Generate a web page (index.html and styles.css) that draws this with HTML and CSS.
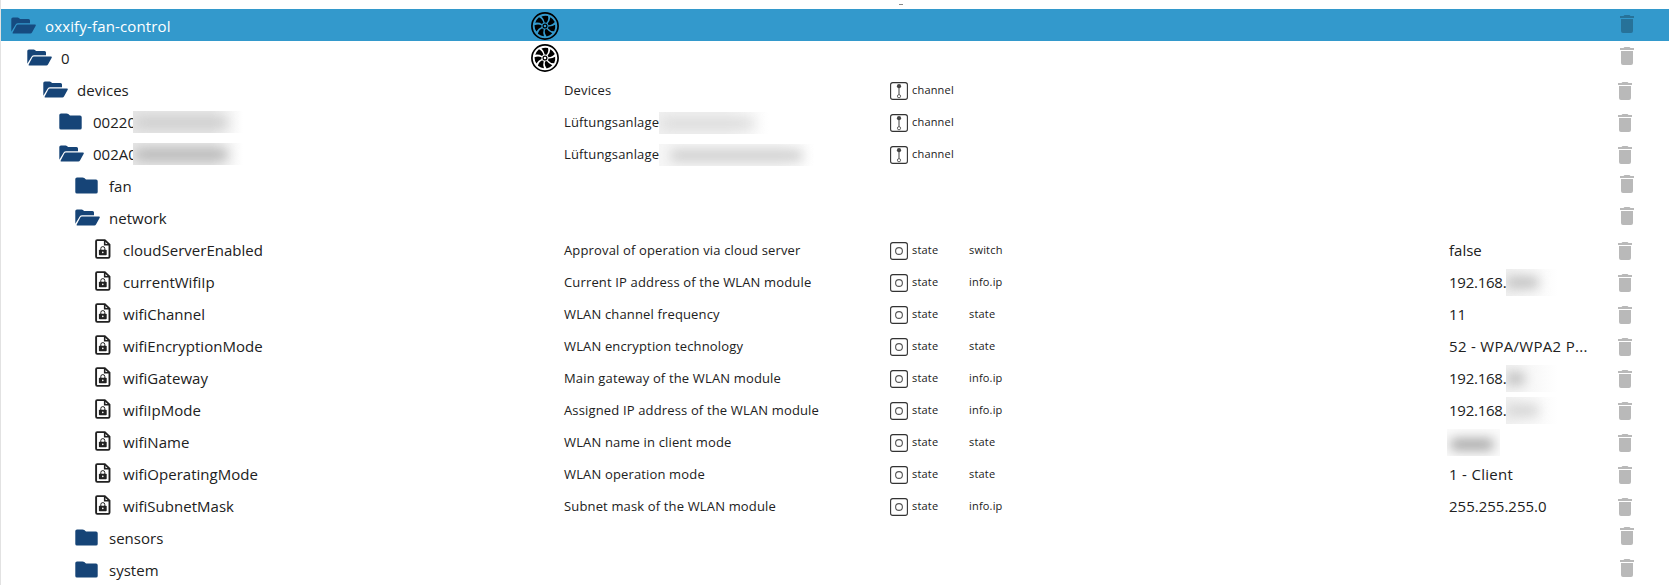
FILE: index.html
```
<!DOCTYPE html>
<html lang="en">
<head>
<meta charset="utf-8">
<title>Objects</title>
<link rel="stylesheet" href="styles.css">
</head>
<body>
<svg class="sprite" aria-hidden="true">
  <symbol id="open" viewBox="0 0 25 17"><path d="M.3 14.8V2Q.3.4 1.9.4H6.600Q7.400.4 8 1L9 2H17.500Q19 2 19 3.500V6.200H7Q5.500 6.200 4.700 7.500Z"/><path d="M2.500 16.600Q1.200 16.600 1.700 15.400L5.300 8.600Q5.800 7.500 7 7.500H24Q25.200 7.500 24.700 8.700L21 15.600Q20.500 16.600 19.300 16.600Z"/></symbol>
  <symbol id="closed" viewBox="0 0 25 17"><path d="M2 .4H7.500Q8.600.4 9.300 1.100L11 2.600H21Q22.700 2.600 22.700 4.300V15Q22.700 16.600 21 16.600H2Q.3 16.600.3 15V2Q.3.4 2 .4Z"/></symbol>
  <symbol id="doc" viewBox="0 0 16 20"><path d="M2.200 1.100H9.800L14.500 5.600V17.500Q14.500 18.900 13.300 18.900H2.200Q1.100 18.900 1.100 17.500V2.300Q1.100 1.100 2.200 1.100Z" fill="none" stroke="currentColor" stroke-width="1.900"/><path d="M9.700 1.500V5.800H14.500" fill="none" stroke="currentColor" stroke-width="1.600"/><rect x="3.900" y="10.700" width="7.800" height="5.600" rx=".8"/><path d="M5.800 11V9.500Q5.800 7.600 7.800 7.600T9.800 9.500V11" fill="none" stroke="currentColor" stroke-width="1"/><circle cx="7.800" cy="13.400" r=".8" fill="#fff"/></symbol>
  <symbol id="fan" viewBox="0 0 28 28"><circle cx="14" cy="14" r="13.100" fill="none" stroke="#000" stroke-width="1.700"/><circle cx="14" cy="14" r="1.900" fill="none" stroke="#000" stroke-width="1.300"/>
    <path id="blade" d="M13.700 10.400Q13.200 6.900 10.500 4.400Q13.400 3.200 17 3.900Q18 7.600 15.500 10.800Q14.700 10.400 13.700 10.400Z"/><use href="#blade" transform="rotate(51.430 14 14)"/><use href="#blade" transform="rotate(102.860 14 14)"/><use href="#blade" transform="rotate(154.290 14 14)"/><use href="#blade" transform="rotate(205.710 14 14)"/><use href="#blade" transform="rotate(257.140 14 14)"/><use href="#blade" transform="rotate(308.570 14 14)"/></symbol>
  <symbol id="channel" viewBox="0 0 18 18"><rect x=".6" y=".6" width="16.800" height="16.800" rx="2.200" fill="none" stroke="#333" stroke-width="1.100"/><path d="M9 5V13" stroke="#888" stroke-width="1.600"/><circle cx="9" cy="4.200" r="2.100" fill="#444"/><circle cx="9" cy="14.200" r="1.600" fill="#fff" stroke="#555" stroke-width=".9"/></symbol>
  <symbol id="state" viewBox="0 0 18 18"><rect x=".6" y=".6" width="16.800" height="16.800" rx="2.200" fill="none" stroke="#333" stroke-width="1.100"/><circle cx="9" cy="9" r="3.400" fill="none" stroke="#555" stroke-width="1.100"/></symbol>
  <symbol id="trash" viewBox="0 0 14 18"><path d="M0 1H3.500L4.500 0H9.500L10.500 1H14V3H0ZM1 4H13V16Q13 18 11 18H3Q1 18 1 16Z"/></symbol>
</svg>
<main class="tree" id="tree"></main>
<script src="tree.js"></script>
</body>
</html>
```
FILE: styles.css
```
* { box-sizing: border-box; }
body {
  margin: 0;
  height: 585px;
  overflow: hidden;
  background: #fff;
  color: #212121;
  font-family: "Open Sans", "Noto Sans", sans-serif;
}
.sprite { position: absolute; width: 0; height: 0; }
.tree {
  position: relative;
  height: 585px;
  padding-top: 9px;
  border-left: 1px solid #e2e2e2;
}
.tree::before {
  content: "";
  position: absolute;
  left: 898px;
  top: 4px;
  width: 4px;
  height: 1px;
  background: #888;
}
.row {
  display: grid;
  grid-template-columns: 530px 33px 326px 79px 480px 169px 51px;
  height: 32px;
  align-items: center;
}
.row.selected { background: #3399cc; color: #fff; }
.id { display: flex; align-items: center; height: 32px; font-size: 15px; letter-spacing: .02px; }
.selected .id { letter-spacing: .15px; }
.level-0 { padding-left: 10px; }
.level-1 { padding-left: 26px; }
.level-2 { padding-left: 42px; }
.level-3 { padding-left: 58px; }
.level-4 { padding-left: 74px; }
.leaf { padding-left: 94px; }
.folder { width: 25px; height: 17px; margin-right: 9px; fill: #164477; }
.selected .folder { fill: #164b80; }
.doc { width: 16px; height: 20px; margin-right: 12px; fill: currentColor; }
.fan { display: block; width: 28px; height: 28px; margin-top: 2px; }
.text { position: relative; white-space: nowrap; line-height: 20px; margin-top: 2px; }
.name { font-size: 13px; letter-spacing: .15px; padding-top: 2px; }
.type { display: flex; align-items: center; gap: 4px; }
.type svg { width: 18px; height: 18px; margin-top: 4px; }
.type, .role { font-size: 11px; line-height: 20px; letter-spacing: .18px; }
.role { padding-top: 2px; }
.value { font-size: 15px; }
.value .text { display: block; width: 150px; }
.value.spaced { letter-spacing: .3px; }
.value.masked { letter-spacing: -.25px; }
.trash { display: block; width: 14px; height: 18px; margin-top: 4px; fill: #b9b9b9; }
.container .trash { margin: -2px 0 0 2px; }
.selected .trash { fill: #277299; }
.redacted {
  position: absolute;
  overflow: hidden;
  top: -1px;
  height: 22px;
  background: linear-gradient(90deg, #e7e7e7 70%, #fff);
}
.redacted::after {
  content: "";
  position: absolute;
  inset: 6px 16px 5px 3px;
  background: #bbb;
  filter: blur(6px);
}
.r-id { left: 40px; width: 110px; }
.r-id::after { background: #ccc; }
.r-id.strong::after { background: #b4b4b4; }
.r-name { left: 95px; width: 110px; background: linear-gradient(90deg, #f0f0f0 60%, #fff); }
.r-name::after { background: #dcdcdc; }
.r-name.long { width: 155px; background: linear-gradient(90deg, #f6f6f6 75%, #fff); }
.r-name.long::after { left: 12px; right: 12px; background: #ccc; }
.r-value { left: 57px; width: 52px; top: -3px; height: 27px; background: linear-gradient(90deg, #f1f1f1, #fff); }
.r-value::after { inset: 8px 20px 8px 1px; background: #bdbdbd; }
.r-value.faint::after { right: 34px; background: #b8b8b8; }
.r-value.pale::after { background: #d2d2d2; }
.r-value.whole { left: -2px; width: 53px; background: #fbfbfb; }
.r-value.whole::after { inset: 10px 7px 6px 4px; background: #a0a0a0; }
```
FILE: tree.js
```
const rows = [
  { id: 'oxxify-fan-control', level: 0, icon: 'open', fan: true, selected: true },
  { id: '0', level: 1, icon: 'open', fan: true },
  { id: 'devices', level: 2, icon: 'open', name: 'Devices', type: 'channel' },
  { id: '00220', level: 3, icon: 'closed', name: 'Lüftungsanlage', type: 'channel', hideId: 'r-id', hideName: 'r-name' },
  { id: '002A0', level: 3, icon: 'open', name: 'Lüftungsanlage', type: 'channel', hideId: 'r-id strong', hideName: 'r-name long' },
  { id: 'fan', level: 4, icon: 'closed' },
  { id: 'network', level: 4, icon: 'open' },
  { id: 'cloudServerEnabled', name: 'Approval of operation via cloud server', type: 'state', role: 'switch', value: 'false' },
  { id: 'currentWifiIp', name: 'Current IP address of the WLAN module', type: 'state', role: 'info.ip', value: '192.168.', hideValue: 'r-value' },
  { id: 'wifiChannel', name: 'WLAN channel frequency', type: 'state', role: 'state', value: '11' },
  { id: 'wifiEncryptionMode', name: 'WLAN encryption technology', type: 'state', role: 'state', value: '52 - WPA/WPA2 P...' },
  { id: 'wifiGateway', name: 'Main gateway of the WLAN module', type: 'state', role: 'info.ip', value: '192.168.', hideValue: 'r-value faint' },
  { id: 'wifiIpMode', name: 'Assigned IP address of the WLAN module', type: 'state', role: 'info.ip', value: '192.168.', hideValue: 'r-value pale' },
  { id: 'wifiName', name: 'WLAN name in client mode', type: 'state', role: 'state', value: '&nbsp;', hideValue: 'r-value whole' },
  { id: 'wifiOperatingMode', name: 'WLAN operation mode', type: 'state', role: 'state', value: '1 - Client' },
  { id: 'wifiSubnetMask', name: 'Subnet mask of the WLAN module', type: 'state', role: 'info.ip', value: '255.255.255.0' },
  { id: 'sensors', level: 4, icon: 'closed' },
  { id: 'system', level: 4, icon: 'closed' }
];

const svg = (name, cls) => `<svg class="${cls}"><use href="#${name}"/></svg>`;
const text = (value, hidden) =>
  value ? `<span class="text">${value}${hidden ? `<i class="redacted ${hidden}"></i>` : ''}</span>` : '';
const spacing = r => r.hideValue ? ' masked' : (r.value || '').includes(' - ') ? ' spaced' : '';

document.getElementById('tree').innerHTML = rows.map(r => `
  <div class="row${r.selected ? ' selected' : ''}${r.type ? '' : ' container'}">
    <div class="id ${r.icon ? 'level-' + r.level : 'leaf'}">${r.icon ? svg(r.icon, 'folder') : svg('doc', 'doc')}${text(r.id, r.hideId)}</div>
    <div>${r.fan ? svg('fan', 'fan') : ''}</div>
    <div class="name">${text(r.name, r.hideName)}</div>
    <div class="type">${r.type ? svg(r.type, 'kind') + text(r.type) : ''}</div>
    <div class="role">${text(r.role)}</div>
    <div class="value${spacing(r)}">${text(r.value, r.hideValue)}</div>
    <div>${svg('trash', 'trash')}</div>
  </div>`).join('');
```
